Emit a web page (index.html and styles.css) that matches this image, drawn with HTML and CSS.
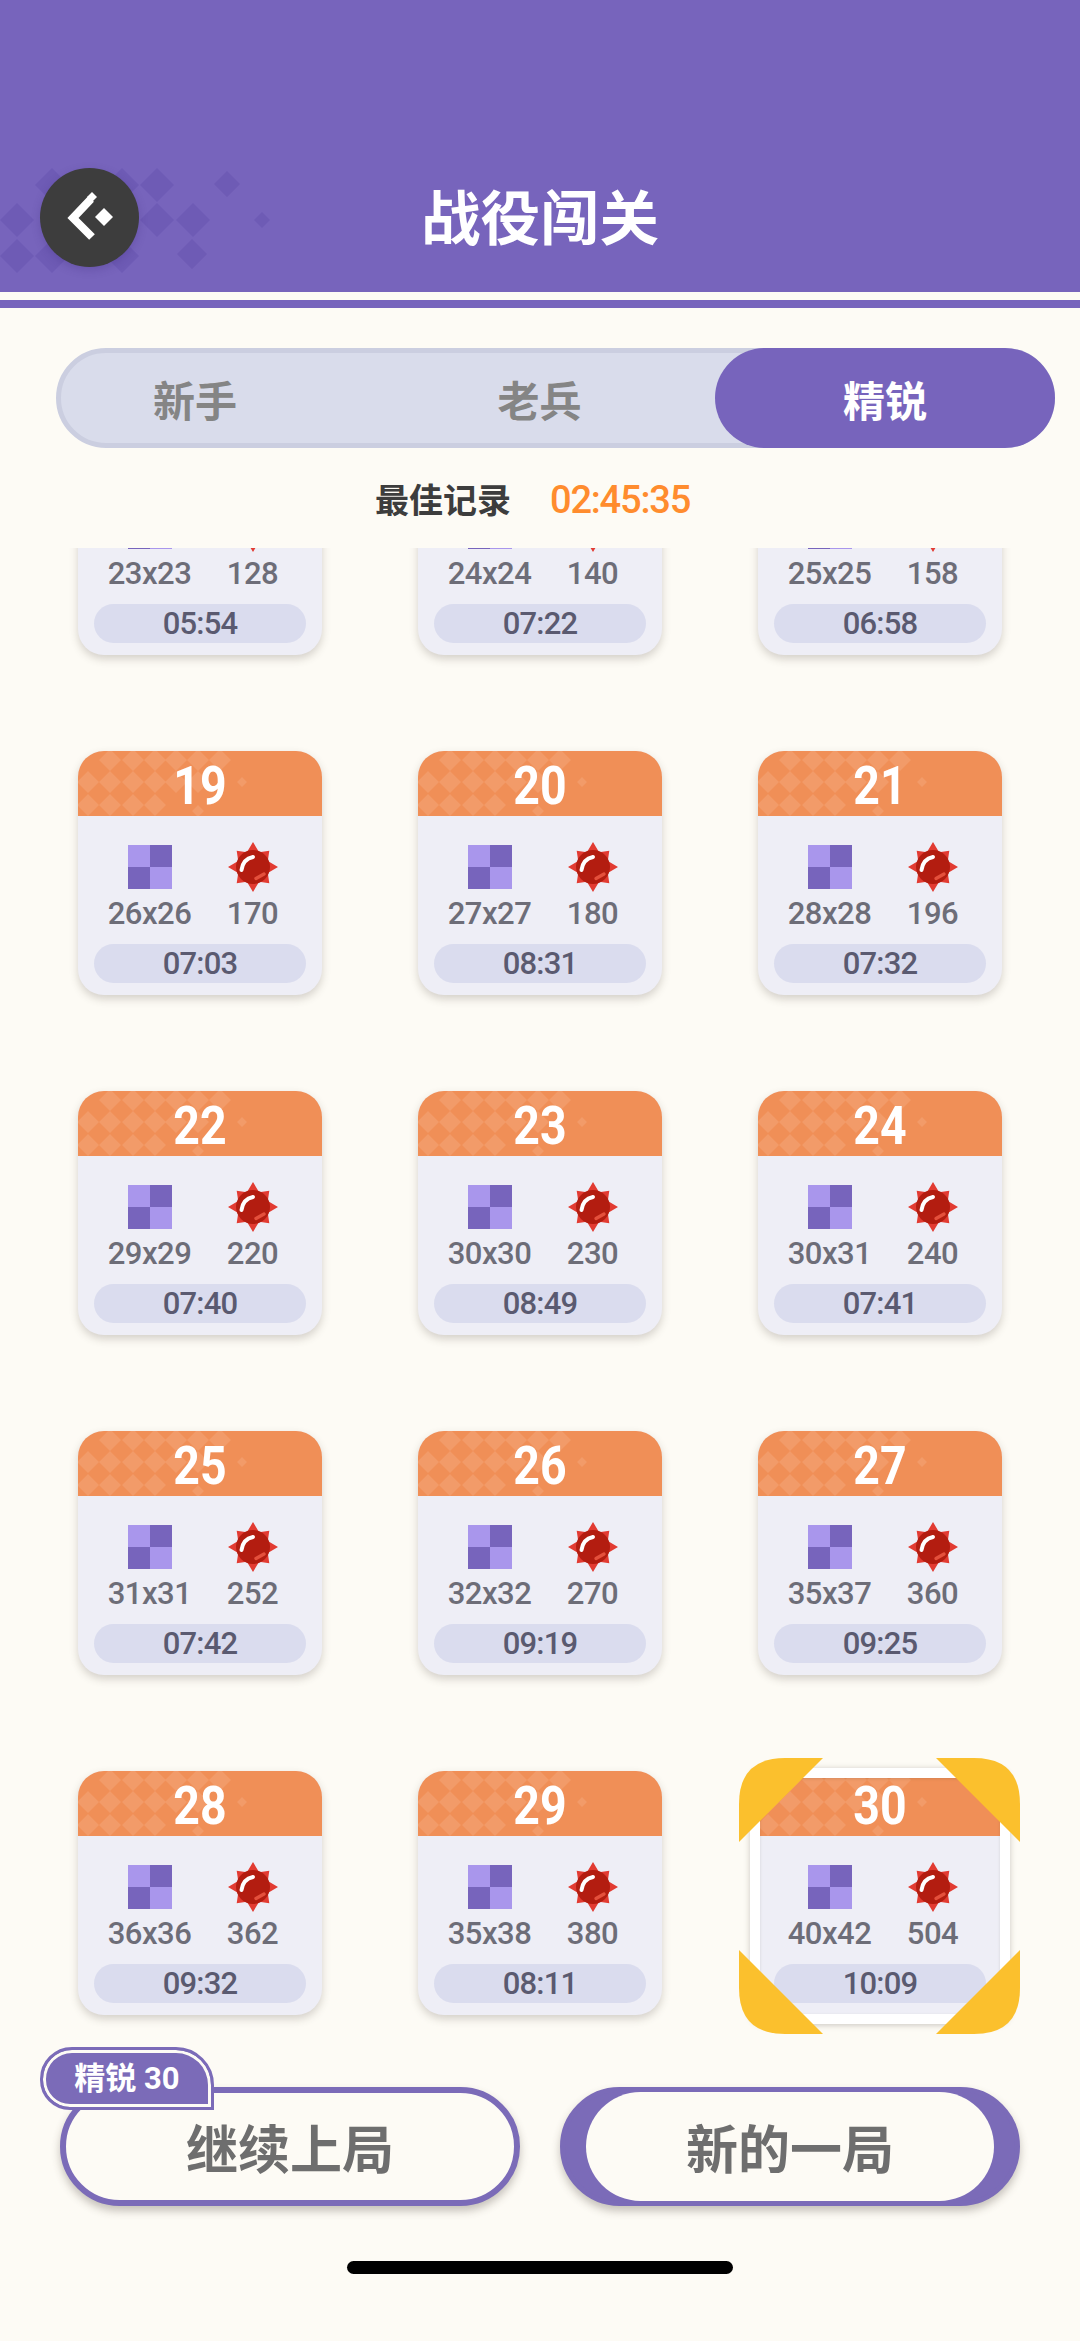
FILE: index.html
```html
<!DOCTYPE html>
<html>
<head>
  <title>战役闯关</title>
  <meta charset="utf-8">
  <meta name="viewport" content="width=device-width, initial-scale=1">
  <link rel="stylesheet" href="styles.css">
</head>
<body>
  <!-- shared icons -->
  <svg class="defs" width="0" height="0">
    <symbol id="dots" viewBox="0 0 180 65">
      <path d="M32 -2l11 11-11 11-11-11zM55 -2l11 11-11 11-11-11zM77 -2l11 11-11 11-11-11zM98 -2l11 11-11 11-11-11zM120 -2l11 11-11 11-11-11zM142 -2l11 11-11 11-11-11z"/>
      <path d="M10 20l11 11-11 11-11-11zM32 20l11 11-11 11-11-11zM55 20l11 11-11 11-11-11zM77 20l11 11-11 11-11-11zM98 20l11 11-11 11-11-11zM120 20l11 11-11 11-11-11zM164 26l5 5-5 5-5-5z"/>
      <path d="M10 43l11 11-11 11-11-11zM32 43l11 11-11 11-11-11zM55 43l11 11-11 11-11-11zM77 43l11 11-11 11-11-11zM120 54l6 6-6 6-6-6z"/>
    </symbol>
    <symbol id="board" viewBox="0 0 44 44">
      <rect width="22" height="22" fill="#a996ec"/>
      <rect x="22" width="22" height="22" fill="#7764bc"/>
      <rect y="22" width="22" height="22" fill="#7764bc"/>
      <rect x="22" y="22" width="22" height="22" fill="#a996ec"/>
    </symbol>
    <symbol id="mine" viewBox="0 0 50 50">
      <polygon fill="#e23b32" points="25,0 31.1,10.2 41.3,8.7 39.8,18.9 50,25 39.8,31.1 41.3,41.3 31.1,39.8 25,50 18.9,39.8 8.7,41.3 10.2,31.1 0,25 10.2,18.9 8.7,8.7 18.9,10.2"/>
      <circle cx="25" cy="25" r="17" fill="#b31d10"/>
      <path d="M13.5 28Q15 17 25 15" fill="none" stroke="#fff" stroke-width="4" stroke-linecap="round"/>
      <path d="M28 36.5L36 32" fill="none" stroke="#e4503c" stroke-width="3.4" stroke-linecap="round"/>
    </symbol>
  </svg>

  <header class="topbar">
    <svg class="topbar-dots" width="290" height="110" viewBox="0 0 290 110">
      <path d="M17 39l17 17-17 17-17-17zM17 75l17 17-17 17-17-17zM52 4l17 17-17 17-17-17zM52 75l17 17-17 17-17-17zM122 4l17 17-17 17-17-17zM157 4l17 17-17 17-17-17zM122 39l17 17-17 17-17-17zM157 39l17 17-17 17-17-17zM193 39l17 17-17 17-17-17zM122 75l17 17-17 17-17-17zM192 75l15 15-15 15-15-15zM227 7l13 13-13 13-13-13zM262 48l8 8-8 8-8-8z"/>
    </svg>
    <button class="back">
      <svg width="52" height="56" viewBox="0 0 52 56">
        <path d="M27 9l-18 19 19 19" fill="none" stroke="#fff" stroke-width="8"/>
        <path d="M28 2l5 5-5 5-5-5z" fill="#fff"/>
        <path d="M40 18l9 9-9 9-9-9z" fill="#fff"/>
      </svg>
    </button>
    <h1 class="title">战役闯关</h1>
  </header>
  <div class="stripe"></div>

  <nav class="tabs">
    <span class="tab">新手</span>
    <span class="tab tab-mid">老兵</span>
    <span class="tab tab-on">精锐</span>
  </nav>

  <p class="best"><span class="best-label">最佳记录</span><span class="best-time">02:45:35</span></p>

  <section class="levels">
    <div class="level-grid">
      <!-- this row is scrolled almost out, its numbers are hidden -->
      <div class="level">
        <div class="level-no"></div>
        <div class="stats">
          <div class="stat"><svg class="ico-board"><use href="#board"/></svg><span>23x23</span></div>
          <div class="stat"><svg class="ico-mine"><use href="#mine"/></svg><span>128</span></div>
        </div>
        <div class="time">05:54</div>
      </div>
      <div class="level">
        <div class="level-no"></div>
        <div class="stats">
          <div class="stat"><svg class="ico-board"><use href="#board"/></svg><span>24x24</span></div>
          <div class="stat"><svg class="ico-mine"><use href="#mine"/></svg><span>140</span></div>
        </div>
        <div class="time">07:22</div>
      </div>
      <div class="level">
        <div class="level-no"></div>
        <div class="stats">
          <div class="stat"><svg class="ico-board"><use href="#board"/></svg><span>25x25</span></div>
          <div class="stat"><svg class="ico-mine"><use href="#mine"/></svg><span>158</span></div>
        </div>
        <div class="time">06:58</div>
      </div>

      <div class="level">
        <div class="level-no"><svg class="dots"><use href="#dots"/></svg><span>19</span></div>
        <div class="stats">
          <div class="stat"><svg class="ico-board"><use href="#board"/></svg><span>26x26</span></div>
          <div class="stat"><svg class="ico-mine"><use href="#mine"/></svg><span>170</span></div>
        </div>
        <div class="time">07:03</div>
      </div>
      <div class="level">
        <div class="level-no"><svg class="dots"><use href="#dots"/></svg><span>20</span></div>
        <div class="stats">
          <div class="stat"><svg class="ico-board"><use href="#board"/></svg><span>27x27</span></div>
          <div class="stat"><svg class="ico-mine"><use href="#mine"/></svg><span>180</span></div>
        </div>
        <div class="time">08:31</div>
      </div>
      <div class="level">
        <div class="level-no"><svg class="dots"><use href="#dots"/></svg><span>21</span></div>
        <div class="stats">
          <div class="stat"><svg class="ico-board"><use href="#board"/></svg><span>28x28</span></div>
          <div class="stat"><svg class="ico-mine"><use href="#mine"/></svg><span>196</span></div>
        </div>
        <div class="time">07:32</div>
      </div>

      <div class="level">
        <div class="level-no"><svg class="dots"><use href="#dots"/></svg><span>22</span></div>
        <div class="stats">
          <div class="stat"><svg class="ico-board"><use href="#board"/></svg><span>29x29</span></div>
          <div class="stat"><svg class="ico-mine"><use href="#mine"/></svg><span>220</span></div>
        </div>
        <div class="time">07:40</div>
      </div>
      <div class="level">
        <div class="level-no"><svg class="dots"><use href="#dots"/></svg><span>23</span></div>
        <div class="stats">
          <div class="stat"><svg class="ico-board"><use href="#board"/></svg><span>30x30</span></div>
          <div class="stat"><svg class="ico-mine"><use href="#mine"/></svg><span>230</span></div>
        </div>
        <div class="time">08:49</div>
      </div>
      <div class="level">
        <div class="level-no"><svg class="dots"><use href="#dots"/></svg><span>24</span></div>
        <div class="stats">
          <div class="stat"><svg class="ico-board"><use href="#board"/></svg><span>30x31</span></div>
          <div class="stat"><svg class="ico-mine"><use href="#mine"/></svg><span>240</span></div>
        </div>
        <div class="time">07:41</div>
      </div>

      <div class="level">
        <div class="level-no"><svg class="dots"><use href="#dots"/></svg><span>25</span></div>
        <div class="stats">
          <div class="stat"><svg class="ico-board"><use href="#board"/></svg><span>31x31</span></div>
          <div class="stat"><svg class="ico-mine"><use href="#mine"/></svg><span>252</span></div>
        </div>
        <div class="time">07:42</div>
      </div>
      <div class="level">
        <div class="level-no"><svg class="dots"><use href="#dots"/></svg><span>26</span></div>
        <div class="stats">
          <div class="stat"><svg class="ico-board"><use href="#board"/></svg><span>32x32</span></div>
          <div class="stat"><svg class="ico-mine"><use href="#mine"/></svg><span>270</span></div>
        </div>
        <div class="time">09:19</div>
      </div>
      <div class="level">
        <div class="level-no"><svg class="dots"><use href="#dots"/></svg><span>27</span></div>
        <div class="stats">
          <div class="stat"><svg class="ico-board"><use href="#board"/></svg><span>35x37</span></div>
          <div class="stat"><svg class="ico-mine"><use href="#mine"/></svg><span>360</span></div>
        </div>
        <div class="time">09:25</div>
      </div>

      <div class="level">
        <div class="level-no"><svg class="dots"><use href="#dots"/></svg><span>28</span></div>
        <div class="stats">
          <div class="stat"><svg class="ico-board"><use href="#board"/></svg><span>36x36</span></div>
          <div class="stat"><svg class="ico-mine"><use href="#mine"/></svg><span>362</span></div>
        </div>
        <div class="time">09:32</div>
      </div>
      <div class="level">
        <div class="level-no"><svg class="dots"><use href="#dots"/></svg><span>29</span></div>
        <div class="stats">
          <div class="stat"><svg class="ico-board"><use href="#board"/></svg><span>35x38</span></div>
          <div class="stat"><svg class="ico-mine"><use href="#mine"/></svg><span>380</span></div>
        </div>
        <div class="time">08:11</div>
      </div>
      <div class="level level-on">
        <div class="level-no"><svg class="dots"><use href="#dots"/></svg><span>30</span></div>
        <div class="stats">
          <div class="stat"><svg class="ico-board"><use href="#board"/></svg><span>40x42</span></div>
          <div class="stat"><svg class="ico-mine"><use href="#mine"/></svg><span>504</span></div>
        </div>
        <div class="time">10:09</div>
        <div class="frame"></div>
        <svg class="corners" width="281" height="276" viewBox="0 0 281 276">
          <path d="M0 84V46Q0 0 46 0H84Z"/>
          <path d="M281 84V46Q281 0 235 0H197Z"/>
          <path d="M0 192V230Q0 276 46 276H84Z"/>
          <path d="M281 192V230Q281 276 235 276H197Z"/>
        </svg>
      </div>
    </div>
  </section>

  <footer class="actions">
    <button class="btn btn-continue">
      <span class="tag">精锐 30</span>
      继续上局
    </button>
    <button class="btn btn-new"><span class="btn-new-in">新的一局</span></button>
  </footer>
  <div class="home-bar"></div>
</body>
</html>
```

FILE: styles.css
```css
* {
  box-sizing: border-box;
}
html, body {
  margin: 0;
  padding: 0;
}
body {
  width: 1080px;
  height: 2341px;
  overflow: hidden;
  background-color: #fdfbf5;
  font-family: Roboto, "Noto Sans CJK SC", sans-serif;
}
.defs {
  position: absolute;
}

/* top bar */
.topbar {
  position: relative;
  height: 292px;
  padding: 168px 0 0 40px;
  background-color: #7764bc;
  display: grid;
  grid-template-columns: 1fr auto 1fr;
  grid-template-rows: 99px;
}
.topbar-dots {
  position: absolute;
  left: 0;
  top: 164px;
  fill: #6e5bb5;
}
.back {
  position: relative;
  width: 99px;
  height: 99px;
  padding: 0;
  border: none;
  border-radius: 50%;
  background-color: #3d3d3d;
  box-shadow: 0 3px 8px rgba(60, 40, 120, .25);
  display: flex;
  align-items: center;
  justify-content: center;
}
.title {
  position: relative;
  margin: 0 40px 0 0;
  color: #fff;
  font-size: 59.5px;
  font-weight: 700;
  line-height: 105px;
}
.stripe {
  height: 8px;
  margin-top: 8px;
  background-color: #7764bc;
}

/* tabs */
.tabs {
  height: 100px;
  margin: 40px 25px 0 56px;
  border: 5px solid #cbcee0;
  border-radius: 50px;
  background-color: #d9dceb;
  display: grid;
  grid-template-columns: 268px 1fr 335px;
}
.tab {
  color: #858585;
  font-size: 42px;
  font-weight: 700;
  display: flex;
  align-items: center;
  justify-content: center;
}
.tab-mid {
  padding-left: 35px;
}
.tab-on {
  margin: -5px -5px -5px 0;
  border-radius: 50px;
  background-color: #7764bc;
  color: #fff;
}

/* best record */
.best {
  height: 100px;
  margin: 0;
  padding-left: 375px;
  display: flex;
  align-items: center;
  gap: 39px;
}
.best-label {
  color: #3d3d3d;
  font-size: 34px;
  font-weight: 700;
}
.best-time {
  margin-top: 4px;
  color: #ff8c2e;
  font-size: 38px;
  font-weight: 500;
  letter-spacing: -1.2px;
}

/* level list */
.levels {
  height: 1492px;
  overflow: hidden;
}
.level-grid {
  margin-top: -137px;
  padding-left: 78px;
  display: grid;
  grid-template-columns: repeat(3, 244px);
  grid-auto-rows: 244px;
  gap: 96px;
}
.level {
  position: relative;
  border-radius: 26px;
  background-color: #eeeef6;
  box-shadow: 0 4px 9px rgba(70, 60, 50, .22);
}
.level-no {
  position: relative;
  height: 65px;
  overflow: hidden;
  border-radius: 26px 26px 0 0;
  background-color: #f08f57;
  display: flex;
  align-items: center;
  justify-content: center;
}
.dots {
  position: absolute;
  left: 0;
  top: 0;
  width: 180px;
  height: 65px;
  fill: #f29b69;
}
.level-no span {
  position: relative;
  margin-top: 4px;
  color: #fff;
  font-size: 54px;
  font-weight: 700;
  line-height: 56px;
  transform: scaleX(.86);
}
.stats {
  margin-top: 26px;
  padding-left: 2px;
  display: grid;
  grid-template-columns: 103px 103px;
  justify-content: center;
}
.stat {
  display: flex;
  flex-direction: column;
  align-items: center;
  color: #6d6d78;
  font-size: 31px;
  font-weight: 500;
  letter-spacing: -.5px;
  line-height: 34px;
}
.stat span {
  margin-top: 5px;
}
.ico-board {
  width: 44px;
  height: 44px;
  margin: 3px 0;
}
.ico-mine {
  width: 50px;
  height: 50px;
}
.time {
  height: 39px;
  margin: 13px 16px 0;
  border-radius: 20px;
  background-color: #dadcee;
  color: #5a5a70;
  font-size: 31px;
  font-weight: 500;
  letter-spacing: -.8px;
  line-height: 39px;
  text-align: center;
}
.frame {
  position: absolute;
  left: -8px;
  right: -8px;
  top: -3px;
  bottom: -9px;
  border: 10px solid #fff;
  border-radius: 14px;
  box-shadow: 0 1px 6px rgba(70, 60, 50, .25), inset 0 1px 3px rgba(70, 60, 50, .15);
}
.corners {
  position: absolute;
  left: -19px;
  top: -13px;
  fill: #fbc02d;
}

/* bottom buttons */
.actions {
  height: 166px;
  padding: 47px 0 0 60px;
  display: flex;
  gap: 40px;
}
.btn {
  position: relative;
  width: 460px;
  height: 119px;
  padding: 0;
  border: 5px solid #7b6bb8;
  border-radius: 60px;
  background-color: #fdfbf5;
  box-shadow: 0 5px 9px rgba(70, 60, 50, .3);
  color: #6e6e6e;
  font-family: Roboto, "Noto Sans CJK SC", sans-serif;
  font-size: 52px;
  font-weight: 700;
}
.btn-continue {
  border-width: 6px;
}
.btn-new {
  padding: 0 21px;
  background-color: #7b6bb8;
}
.btn-new-in {
  height: 100%;
  border-radius: 55px;
  background-color: #fdfbf5;
  display: flex;
  align-items: center;
  justify-content: center;
}
.tag {
  position: absolute;
  left: -26px;
  top: -46px;
  width: 174px;
  height: 63px;
  border: 3px solid #7b6bb8;
  border-radius: 32px 38px 0 30px;
  background-color: #7b6bb8;
  box-shadow: inset 0 0 0 3px #fdfbf5;
  color: #fff;
  font-size: 31px;
  line-height: 57px;
  text-align: center;
}
.home-bar {
  width: 386px;
  height: 13px;
  margin: 55px auto 0;
  border-radius: 7px;
  background-color: #000;
}
```
